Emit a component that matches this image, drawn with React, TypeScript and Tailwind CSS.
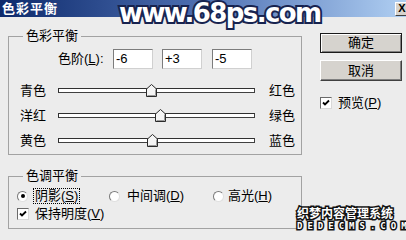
import React from 'react';

const SLIDERS = [
  { left: '青色', right: '红色', value: -6 },
  { left: '洋红', right: '绿色', value: 3 },
  { left: '黄色', right: '蓝色', value: -5 },
];

const TRACK_W = 197;

const Thumb: React.FC<{ value: number }> = ({ value }) => {
  const x = ((value + 100) / 200) * TRACK_W - 5.5;
  return (
    <svg
      width="11"
      height="13"
      viewBox="0 0 11 13"
      className="absolute top-[-5px]"
      style={{ left: x }}
    >
      <polygon points="5.5,0.5 10.5,5 10.5,12.5 0.5,12.5 0.5,5" fill="#f4f4f4" stroke="#2a2a2a" />
      <polyline points="1.5,11.5 9.5,11.5 9.5,5.5" fill="none" stroke="#9a9a9a" />
    </svg>
  );
};

const CheckBox: React.FC = () => (
  <span className="w-[12px] h-[12px] bg-white border border-t-[#6a6a6a] border-l-[#6a6a6a] border-b-[#d8d8d8] border-r-[#d8d8d8] flex items-center justify-center shrink-0">
    <svg width="8" height="8" viewBox="0 0 8 8">
      <path d="M1 3.5 L3 5.5 L7 1.5" fill="none" stroke="#000" strokeWidth="1.8" />
    </svg>
  </span>
);

const Radio: React.FC<{ checked?: boolean }> = ({ checked }) => (
  <span className="w-[11px] h-[11px] rounded-full bg-white border border-t-[#7a7a7a] border-l-[#7a7a7a] border-b-[#e0e0e0] border-r-[#e0e0e0] flex items-center justify-center shrink-0">
    {checked && <span className="w-[4px] h-[4px] rounded-full bg-black" />}
  </span>
);

const NumberBox: React.FC<{ value: string; className?: string }> = ({ value, className }) => (
  <div
    className={`w-[40px] h-[20px] bg-white border border-t-[#7c7c7c] border-l-[#7c7c7c] border-b-[#d0d0d0] border-r-[#d0d0d0] pl-[2px] flex items-center text-[13px] ${className ?? ''}`}
  >
    {value}
  </div>
);

const App: React.FC = () => {
  return (
    <div className="w-[406px] h-[240px] bg-[#ececec] relative overflow-hidden [font-family:'Liberation_Sans','Noto_Sans_CJK_SC',sans-serif] text-[12px] leading-[14px] text-black">
      {/* title bar */}
      <div className="h-[17px] bg-gradient-to-r from-[#0e2a6c] via-[#4f70b2] to-[#b0cff2] flex items-center justify-between pl-[2px]">
        <span className="text-white font-bold text-[13px] tracking-[1px]">色彩平衡</span>
        <div className="w-[14px] h-[14px] mr-[-3px] bg-[#d6d3ce] border border-t-white border-l-white border-b-[#404040] border-r-[#404040] flex items-center justify-center text-[11px] font-bold leading-none">
          X
        </div>
      </div>

      <div className="flex">
        {/* left column */}
        <div className="ml-[8px] w-[294px]">
          <fieldset className="mt-[12px] border border-[#a2a2a2] pb-[1px]">
            <legend className="ml-[14px] px-[3px] text-[13px]">色彩平衡</legend>
            <div className="flex items-center mt-[6px]">
              <span className="ml-[49px] w-[55px] text-[13px]">
                色阶(<u>L</u>):
              </span>
              <NumberBox value="-6" />
              <NumberBox value="+3" className="ml-[9px]" />
              <NumberBox value="-5" className="ml-[10px]" />
            </div>
            <div className="mt-[9px]">
              {SLIDERS.map((s) => (
                <div key={s.left} className="h-[25px] flex items-center">
                  <span className="ml-[11px] w-[38px] text-[13px]">{s.left}</span>
                  <div className="relative w-[197px] h-[5px] bg-white border border-t-[#303030] border-l-[#303030] border-b-[#404040] border-r-[#404040]">
                    <Thumb value={s.value} />
                  </div>
                  <span className="ml-[14px] text-[13px]">{s.right}</span>
                </div>
              ))}
            </div>
          </fieldset>

          <fieldset className="mt-[14px] border border-[#a2a2a2] pb-[6px]">
            <legend className="ml-[14px] px-[3px] text-[13px]">色调平衡</legend>
            <div className="flex items-center h-[18px] mt-[4px] pl-[8px]">
              <div className="w-[92px] flex items-center">
                <Radio checked />
                <span className="ml-[6px] px-[1px] outline outline-1 outline-dotted outline-black text-[13px]">
                  阴影(<u>S</u>)
                </span>
              </div>
              <div className="w-[104px] flex items-center">
                <Radio />
                <span className="ml-[7px] text-[13px]">
                  中间调(<u>D</u>)
                </span>
              </div>
              <div className="flex items-center">
                <Radio />
                <span className="ml-[4px] text-[13px]">
                  高光(<u>H</u>)
                </span>
              </div>
            </div>
            <div className="flex items-center h-[17px] pl-[8px]">
              <CheckBox />
              <span className="ml-[6px] text-[13px]">
                保持明度(<u>V</u>)
              </span>
            </div>
          </fieldset>
        </div>

        {/* right column */}
        <div className="ml-[18px] w-[82px] mt-[16px] flex flex-col">
          <button className="h-[20px] bg-[#d6d3ce] border border-[#1a1a1a] shadow-[inset_1px_1px_0_#fff,inset_-1px_-1px_0_#808080] text-[13px]">
            确定
          </button>
          <button className="h-[21px] mt-[7px] bg-[#d6d3ce] border border-t-white border-l-white border-b-[#404040] border-r-[#404040] shadow-[inset_-1px_-1px_0_#808080] text-[13px]">
            取消
          </button>
          <div className="flex items-center mt-[15px]">
            <CheckBox />
            <span className="ml-[6px] text-[13px]">
              预览(<u>P</u>)
            </span>
          </div>
        </div>
      </div>

      {/* watermarks */}
      <div className="absolute left-[119px] top-[-2px] text-[26px] leading-[31px] font-bold tracking-[-1.6px] text-white [-webkit-text-stroke:4px_#17234f] [paint-order:stroke_fill] [font-family:'DejaVu_Sans','Liberation_Sans',sans-serif]">
        www.68ps.com
      </div>
      <div className="absolute left-[297px] top-[206px] flex flex-col items-start">
        <span className="text-[12px] leading-[13px] font-bold text-white [-webkit-text-stroke:3px_#111] [paint-order:stroke_fill] [font-family:'Noto_Sans_CJK_SC',sans-serif]">
          织梦内容管理系统
        </span>
        <span className="mt-[2px] text-[9px] leading-[10px] font-bold tracking-[5px] text-white [-webkit-text-stroke:3px_#111] [paint-order:stroke_fill] [font-family:'DejaVu_Sans_Mono',monospace]">
          DEDECMS.COM
        </span>
      </div>
    </div>
  );
};

export default App;
